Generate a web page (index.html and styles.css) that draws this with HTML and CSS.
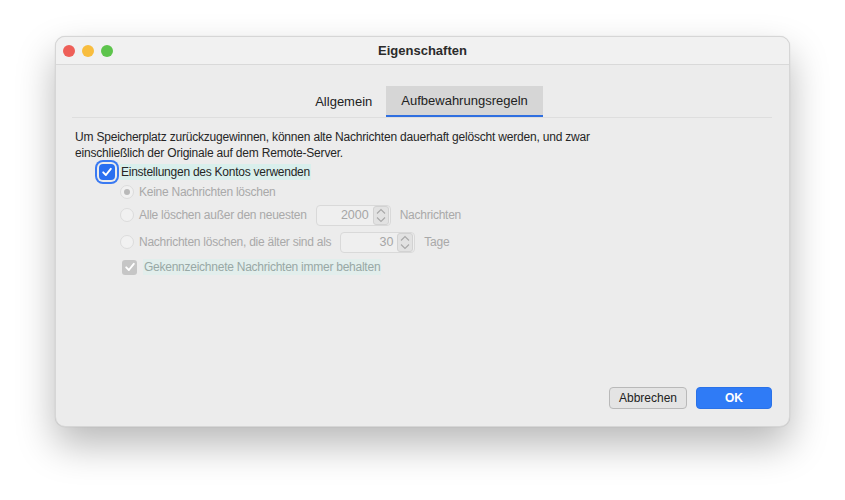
FILE: index.html
```html
<!DOCTYPE html>
<html lang="de">
<head>
    <meta charset="UTF-8">
    <title>Eigenschaften</title>
    <link rel="stylesheet" href="styles.css">
</head>
<body>
    <div class="window">
        <div class="titlebar">
            <div class="lights">
                <span class="light red"></span>
                <span class="light yellow"></span>
                <span class="light green"></span>
            </div>
            <div class="title">Eigenschaften</div>
        </div>

        <div class="content">
            <!-- Tabs -->
            <div class="tabs">
                <div class="tab">Allgemein</div>
                <div class="tab active">Aufbewahrungsregeln</div>
            </div>

            <p class="desc">Um Speicherplatz zurückzugewinnen, können alte Nachrichten dauerhaft gelöscht werden, und zwar<br>einschließlich der Originale auf dem Remote-Server.</p>

            <div class="row check-row">
                <span class="checkbox on">
                    <svg width="12" height="12" viewBox="0 0 12 12"><path d="M2.2 6.3 L4.9 9 L9.8 2.8" fill="none" stroke="#fff" stroke-width="1.9" stroke-linecap="round" stroke-linejoin="round"/></svg>
                </span>
                <span class="label highlight">Einstellungen des Kontos verwenden</span>
            </div>

            <div class="row radio-row r1">
                <span class="radio checked"></span>
                <span class="label">Keine Nachrichten löschen</span>
            </div>
            <div class="row radio-row r2">
                <span class="radio"></span>
                <span class="label">Alle löschen außer den neuesten</span>
                <span class="field">
                    <span class="num">2000</span>
                    <span class="stepper">
                        <svg width="14" height="17" viewBox="0 0 14 17"><path d="M3 6.5 L7 2.5 L11 6.5 M3 10.5 L7 14.5 L11 10.5" fill="none" stroke="#a8a8a8" stroke-width="1.1"/></svg>
                    </span>
                </span>
                <span class="label unit">Nachrichten</span>
            </div>
            <div class="row radio-row r3">
                <span class="radio"></span>
                <span class="label">Nachrichten löschen, die älter sind als</span>
                <span class="field">
                    <span class="num">30</span>
                    <span class="stepper">
                        <svg width="14" height="17" viewBox="0 0 14 17"><path d="M3 6.5 L7 2.5 L11 6.5 M3 10.5 L7 14.5 L11 10.5" fill="none" stroke="#a8a8a8" stroke-width="1.1"/></svg>
                    </span>
                </span>
                <span class="label unit">Tage</span>
            </div>

            <div class="row check-row2">
                <span class="checkbox off">
                    <svg width="12" height="12" viewBox="0 0 12 12"><path d="M2.2 6.3 L4.9 9 L9.8 2.8" fill="none" stroke="#fff" stroke-width="1.9" stroke-linecap="round" stroke-linejoin="round"/></svg>
                </span>
                <span class="label highlight2">Gekennzeichnete Nachrichten immer behalten</span>
            </div>

            <div class="buttons">
                <button class="btn">Abbrechen</button>
                <button class="btn primary">OK</button>
            </div>
        </div>
    </div>
</body>
</html>
```

FILE: styles.css
```css
* {
    margin: 0;
    padding: 0;
    box-sizing: border-box;
    font-family: "Liberation Sans", Arial, sans-serif;
}

body {
    background: #fff;
    width: 845px;
    height: 500px;
    overflow: hidden;
}

.window {
    margin: 36px 0 0 55px;
    width: 735px;
    height: 391px;
    background: #ececec;
    border-radius: 10px;
    border: 1px solid #d6d6d6;
    box-shadow: 0 18px 38px rgba(0, 0, 0, 0.28), 0 0 1px rgba(0, 0, 0, 0.2);
    display: flex;
    flex-direction: column;
    overflow: hidden;
}

.titlebar {
    height: 28px;
    background: #f1f1f1;
    border-bottom: 1px solid #d9d9d9;
    display: flex;
    align-items: center;
    position: relative;
}

.lights {
    display: flex;
    gap: 7px;
    padding-left: 7px;
}

.light {
    width: 12px;
    height: 12px;
    border-radius: 50%;
}

.red { background: #ee5f58; }
.yellow { background: #f8bd3e; }
.green { background: #5dc44c; }

.title {
    position: absolute;
    left: 0;
    right: 0;
    text-align: center;
    font-size: 13px;
    font-weight: bold;
    color: #2b2b2b;
}

.content {
    flex: 1;
    display: flex;
    flex-direction: column;
    padding: 21px 17px 17px 19px;
}

.tabs {
    display: flex;
    justify-content: center;
    border-bottom: 1px solid #dedede;
    margin-left: -3px;
}

.tab {
    padding: 0 14px;
    height: 31px;
    line-height: 31px;
    font-size: 13px;
    color: #222;
}

.tab.active {
    background: #d6d6d6;
    border-bottom: 2px solid #2f6fe0;
    line-height: 30px;
    padding: 0 15px;
}

.desc {
    margin-top: 12px;
    font-size: 12px;
    line-height: 15.5px;
    letter-spacing: -0.2px;
    color: #262626;
}

.row {
    display: flex;
    align-items: center;
    font-size: 12px;
    letter-spacing: -0.25px;
}

.check-row {
    height: 20px;
    margin-top: 1px;
    padding-left: 23px;
}

.checkbox {
    display: flex;
    align-items: center;
    justify-content: center;
    border-radius: 4px;
}

.checkbox.on {
    width: 16px;
    height: 16px;
    background: #2a6ff0;
    box-shadow: 0 0 0 2px #ececec, 0 0 0 4px #3a7af2;
    margin-left: 1px;
    margin-right: 5px;
}

.checkbox.off {
    width: 15px;
    height: 15px;
    background: #c6c6c6;
    border-radius: 3px;
    margin-right: 6px;
}

.label {
    color: #a9a9a9;
    white-space: nowrap;
}

.highlight {
    background: #d9efec;
    color: #262626;
    padding: 1px 1px;
}

.highlight2 {
    background: #e2eeec;
    color: #98a8a5;
    padding: 1px 1px;
}

.radio-row {
    padding-left: 45px;
}

.r1 { height: 20px; }
.r2 { height: 26px; }
.r3 { height: 28px; }

.radio {
    width: 14px;
    height: 14px;
    border-radius: 50%;
    background: #f1f1f1;
    border: 1px solid #dcdcdc;
    margin-right: 5px;
    display: flex;
    align-items: center;
    justify-content: center;
}

.radio.checked::after {
    content: "";
    width: 6px;
    height: 6px;
    border-radius: 50%;
    background: #b9b9b9;
}

.field {
    margin-left: 9px;
    width: 75px;
    height: 21px;
    background: #efefef;
    border: 1px solid #d9d9d9;
    border-radius: 4px;
    display: flex;
    align-items: center;
    justify-content: flex-end;
    padding-right: 1px;
}

.num {
    font-size: 12.5px;
    letter-spacing: 0;
    color: #a6a6a6;
    margin-right: 4px;
}

.stepper {
    width: 16px;
    height: 19px;
    background: #e2e2e2;
    border: 1px solid #d2d2d2;
    border-radius: 3px;
    display: flex;
    align-items: center;
    justify-content: center;
}

.unit {
    margin-left: 9px;
}

.check-row2 {
    height: 22px;
    padding-left: 47px;
}

.buttons {
    margin-top: auto;
    display: flex;
    justify-content: flex-end;
    gap: 9px;
}

.btn {
    width: 78px;
    height: 22px;
    border-radius: 4px;
    border: 1px solid #b9b9b9;
    background: #e4e4e4;
    font-size: 12px;
    color: #222;
}

.btn.primary {
    width: 76px;
    background: #2f7bf6;
    border-color: #2a72e8;
    color: #fff;
    font-weight: bold;
}
```
